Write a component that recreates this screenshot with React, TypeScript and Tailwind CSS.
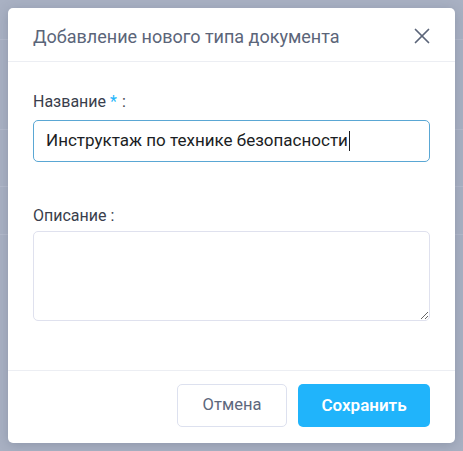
import { X } from "lucide-react";

export default function App() {
    return (
        <div className="relative h-[451px] w-[463px] overflow-hidden bg-[#a9b1c3]" style={{ fontFamily: "Roboto, 'Noto Sans', sans-serif" }}>
            {/* page lines behind the overlay */}
            <div className="flex flex-col">
                <div className="h-[40px] border-b border-[#b3bacb]" />
                <div className="h-[90px] border-b border-[#b3bacb]" />
                <div className="h-[57px] border-b border-[#b3bacb]" />
                <div className="h-[48px] border-b border-[#b3bacb]" />
            </div>

            {/* MODAL */}
            <div className="absolute left-[8px] top-[8px] flex h-[435px] w-[447px] flex-col rounded-[5px] bg-white shadow-[0_2px_12px_rgba(60,70,95,0.25)]">
                <div className="flex h-[54px] items-center justify-between border-b border-[#eceef3] pl-[25px] pr-[20px] pt-[3px]">
                    <h2 className="text-[18px] text-[#5b6579]">Добавление нового типа документа</h2>
                    <X size={26} strokeWidth={1.6} className="text-[#5b6579]" />
                </div>

                <div className="flex-1 px-[25px] pt-[30px]">
                    <label className="block text-[16px] leading-[20px] text-[#393e4c]">
                        Название<span className="ml-[4px] text-[#22b5fb]">*</span><span className="ml-[5px]">:</span>
                    </label>
                    <div className="mt-[8px] flex h-[42px] items-center rounded-[5px] border-[1.5px] border-[#5aa7d4] px-[12px]">
                        <span className="text-[17px] text-[#1b1e24]">Инструктаж по технике безопасности</span>
                        <span className="ml-[1px] h-[20px] w-[1px] bg-[#1b1e24]" />
                    </div>

                    <label className="mt-[44px] block text-[16px] leading-[20px] text-[#393e4c]">Описание :</label>
                    <textarea className="mt-[5px] block h-[90px] w-full resize-y rounded-[5px] border border-[#dfe1ee] outline-none" />
                </div>

                <div className="flex h-[73px] items-start justify-end gap-[11px] border-t border-[#eceef3] px-[25px] pt-[13px]">
                    <button className="h-[43px] w-[110px] rounded-[5px] border border-[#dde1ef] bg-white text-[16.5px] text-[#5d687d]">Отмена</button>
                    <button className="h-[43px] w-[132px] rounded-[5px] bg-[#20b4fb] text-[17px] font-semibold text-white">Сохранить</button>
                </div>
            </div>
        </div>
    );
}
